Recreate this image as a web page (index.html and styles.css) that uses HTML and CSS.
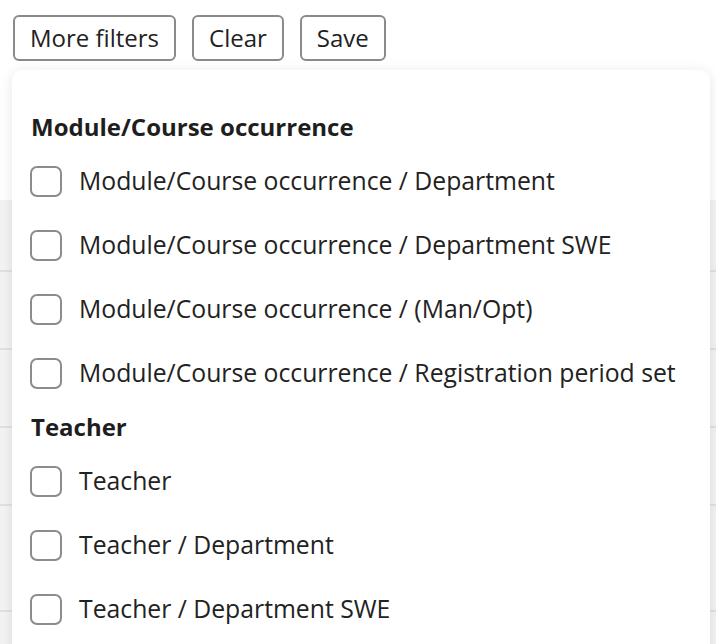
FILE: index.html
```html
<!DOCTYPE html>
<html lang="en">
<head>
<meta charset="utf-8">
<title>Filters</title>
<link rel="stylesheet" href="styles.css">
</head>
<body>
<div class="page">
  <div class="toolbar">
    <button class="btn" type="button">More filters</button>
    <button class="btn" type="button">Clear</button>
    <button class="btn" type="button">Save</button>
  </div>
  <div class="table">
    <div class="row r1"></div>
    <div class="row r2"></div>
    <div class="row r2"></div>
    <div class="row r2"></div>
    <div class="row r5"></div>
    <div class="row r2"></div>
  </div>

  <div class="dropdown">
    <div class="group-title">Module/Course occurrence</div>
    <label class="option"><input type="checkbox" class="box"><span>Module/Course occurrence / Department</span></label>
    <label class="option"><input type="checkbox" class="box"><span>Module/Course occurrence / Department SWE</span></label>
    <label class="option"><input type="checkbox" class="box"><span>Module/Course occurrence / (Man/Opt)</span></label>
    <label class="option"><input type="checkbox" class="box"><span>Module/Course occurrence / Registration period set</span></label>
    <div class="group-title">Teacher</div>
    <label class="option"><input type="checkbox" class="box"><span>Teacher</span></label>
    <label class="option"><input type="checkbox" class="box"><span>Teacher / Department</span></label>
    <label class="option"><input type="checkbox" class="box"><span>Teacher / Department SWE</span></label>
  </div>
</div>
</body>
</html>
```
FILE: styles.css
```css
html, body {
  margin: 0;
  padding: 0;
  background: #ffffff;
  overflow: hidden;
}

body {
  font-family: "Open Sans", "Noto Sans", sans-serif;
  color: #222222;
}

.page {
  position: relative;
  width: 716px;
  height: 644px;
  overflow: hidden;
}

.toolbar {
  display: flex;
  gap: 16px;
  padding: 15px 0 0 13px;
}

.btn {
  height: 46px;
  padding: 0 15px;
  border: 2px solid #8a8a8a;
  border-radius: 6px;
  background: #ffffff;
  color: #222222;
  font-family: "Open Sans", "Noto Sans", sans-serif;
  font-size: 24px;
  line-height: 1;
  cursor: pointer;
}

.table {
  margin-top: 139px;
  background: #f3f3f3;
}

.row {
  border-bottom: 2px solid #e1e1e1;
}

.r1 { height: 70px; }
.r2 { height: 76px; }
.r5 { height: 104px; }

.dropdown {
  position: absolute;
  top: 70px;
  left: 12px;
  width: 698px;
  height: 620px;
  box-sizing: border-box;
  padding: 35px 18px 0 18px;
  background: #ffffff;
  border-radius: 10px;
  box-shadow: 0 2px 14px rgba(0, 0, 0, 0.10);
}

.group-title {
  height: 44px;
  line-height: 44px;
  padding-left: 1px;
  font-size: 24px;
  font-weight: 700;
  color: #1e1e1e;
  white-space: nowrap;
}

.option {
  display: flex;
  align-items: center;
  gap: 17px;
  height: 64px;
  font-size: 24.75px;
  line-height: 64px;
  color: #222222;
  white-space: nowrap;
  cursor: pointer;
}

.box {
  appearance: none;
  -webkit-appearance: none;
  flex: none;
  width: 32px;
  height: 31px;
  margin: 0;
  box-sizing: border-box;
  border: 2px solid #8c8c8c;
  border-radius: 7px;
  background: #ffffff;
}
```
